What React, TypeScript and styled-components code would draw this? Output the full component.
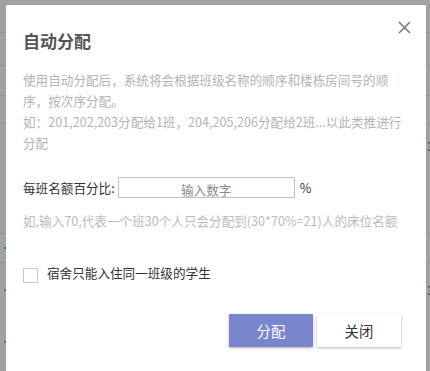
import React from "react";
import styled, { createGlobalStyle } from "styled-components";

const Global = createGlobalStyle`
  html, body { margin: 0; padding: 0; }
  body {
    width: 430px;
    height: 371px;
    overflow: hidden;
    background: #a1a1a1;
    font-family: "Noto Sans CJK SC", "Noto Sans", sans-serif;
  }
`;

const Page = styled.div`
  position: relative;
  width: 430px;
  height: 371px;
  overflow: hidden;
`;

const BackTable = styled.div`
  display: flex;
  flex-direction: column;
`;

const BackRow = styled.div<{ $h: number; $line: boolean }>`
  height: ${(p) => p.$h}px;
  border-bottom: 1px solid ${(p) => (p.$line ? "#939393" : "transparent")};
  box-sizing: border-box;
  display: flex;
  align-items: center;
  justify-content: space-between;
  padding: 0 0 0 4px;
`;

const Dot = styled.span`
  width: 2px;
  height: 2px;
  background: #2f7f72;
`;

const SideNum = styled.span`
  font-size: 12px;
  color: #333;
  margin-right: -4px;
`;

const Overlay = styled.div`
  position: absolute;
  inset: 0;
  display: flex;
  padding: 5px 4px 0 6px;
`;

const Dialog = styled.div`
  position: relative;
  flex: 1;
  min-width: 0;
  background: #fff;
  padding: 24px 17px 0 17px;
  box-sizing: border-box;
  display: flex;
  flex-direction: column;
`;

const Title = styled.h2`
  margin: 0;
  font-size: 17px;
  line-height: 24px;
  font-weight: 700;
  color: #555;
`;

const Close = styled.button`
  position: absolute;
  top: 15px;
  right: 15px;
  width: 14px;
  height: 14px;
  padding: 0;
  border: 0;
  background: transparent;
  cursor: pointer;
  display: flex;
  align-items: center;
  justify-content: center;
`;

const Desc = styled.p`
  margin: 16px 0 0;
  font-size: 12.6px;
  line-height: 21px;
  color: #b4b4b4;
`;

const FieldRow = styled.div`
  display: flex;
  align-items: center;
  margin-top: 24px;
  font-size: 12.6px;
  color: #333;
`;

const Label = styled.span`
  line-height: 21px;
`;

const Input = styled.input`
  width: 177px;
  height: 21px;
  box-sizing: border-box;
  margin: 0 5px 0 3px;
  border: 1px solid #c2c2c2;
  padding: 3px 0 0;
  text-align: center;
  font-family: inherit;
  font-size: 12.6px;
  color: #333;
  outline: none;
  &::placeholder { color: #8c8c8c; }
`;

const Hint = styled.div`
  margin-top: 12px;
  font-size: 12.6px;
  line-height: 21px;
  color: #bbb;
  white-space: nowrap;
`;

const CheckRow = styled.label`
  display: flex;
  align-items: center;
  gap: 9px;
  margin-top: 32px;
  font-size: 12.6px;
  line-height: 18px;
  color: #333;
`;

const Box = styled.span`
  width: 15px;
  height: 15px;
  box-sizing: border-box;
  border: 1px solid #c9c9c9;
  margin-top: 5px;
`;

const Actions = styled.div`
  display: flex;
  justify-content: flex-end;
  gap: 4px;
  margin-top: 31px;
  padding-right: 8px;
`;

const Btn = styled.button<{ $primary?: boolean }>`
  width: 84px;
  height: 33px;
  border: 0;
  border-radius: 1px;
  font-family: inherit;
  font-size: 14.4px;
  background: ${(p) => (p.$primary ? "#7986cb" : "#fff")};
  color: ${(p) => (p.$primary ? "#fff" : "#333")};
  box-shadow: 0 1px 3px rgba(0, 0, 0, 0.3);
  cursor: pointer;
`;

const rows: { h: number; line: boolean; dot?: boolean; num?: boolean }[] = [
  { h: 33, line: true },
  { h: 33, line: true },
  { h: 30, line: true },
  { h: 28, line: true },
  { h: 44, line: false, num: true },
  { h: 66, line: true },
  { h: 29, line: true, dot: true },
  { h: 54, line: false, dot: true, num: true },
  { h: 50, line: false, dot: true },
];

export default function App() {
  return (
    <Page>
      <Global />
      <BackTable>
        {rows.map((r, i) => (
          <BackRow key={i} $h={r.h} $line={r.line}>
            {r.dot ? <Dot /> : <span />}
            {r.num ? <SideNum>3</SideNum> : null}
          </BackRow>
        ))}
      </BackTable>
      <Overlay>
        <Dialog>
          <Title>自动分配</Title>
          <Close aria-label="close">
            <svg width="13" height="13" viewBox="0 0 13 13">
              <path d="M1 1 L12 12 M12 1 L1 12" stroke="#777" strokeWidth="1.5" fill="none" />
            </svg>
          </Close>
          <Desc>
            使用自动分配后，系统将会根据班级名称的顺序和楼栋房间号的顺序，按次序分配。
            <br />
            如：201,202,203分配给1班，204,205,206分配给2班...以此类推进行分配
          </Desc>
          <FieldRow>
            <Label>每班名额百分比:</Label>
            <Input placeholder="输入数字" />
            <span>%</span>
          </FieldRow>
          <Hint>如,输入70,代表一个班30个人只会分配到(30*70%=21)人的床位名额</Hint>
          <CheckRow>
            <Box />
            <span>宿舍只能入住同一班级的学生</span>
          </CheckRow>
          <Actions>
            <Btn $primary>分配</Btn>
            <Btn>关闭</Btn>
          </Actions>
        </Dialog>
      </Overlay>
    </Page>
  );
}
